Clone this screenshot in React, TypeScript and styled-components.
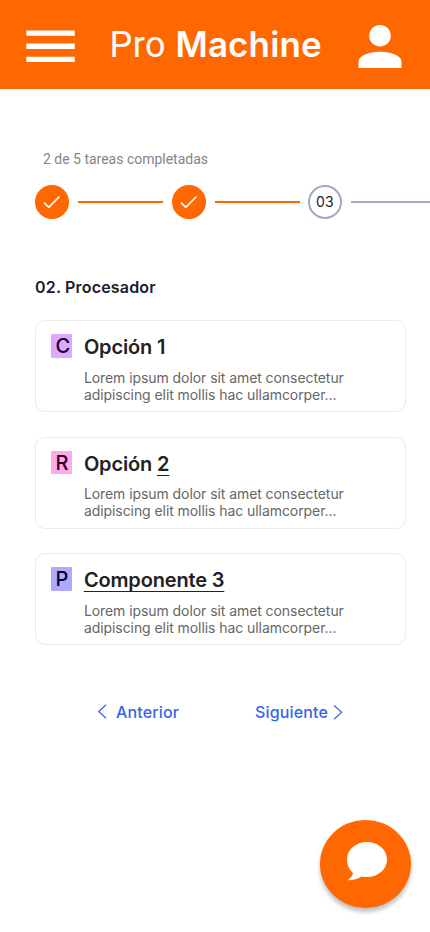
import React from "react";
import styled, { createGlobalStyle } from "styled-components";

const GlobalStyle = createGlobalStyle`
  *, *::before, *::after { box-sizing: border-box; }
  body { margin: 0; background: #fff; overflow: hidden; font-family: Inter, "Liberation Sans", sans-serif; }
  svg { display: block; flex: none; }
  button { font: inherit; border: 0; padding: 0; background: none; cursor: pointer; }
`;

const Screen = styled.div`
  width: 430px;
  height: 932px;
  overflow: hidden;
  background: #fff;
`;

const Header = styled.header`
  display: flex;
  align-items: center;
  height: 89px;
  padding: 0 28px 0 26px;
  background: #ff6700;
`;

const IconButton = styled.button`
  color: #fff;
`;

const Brand = styled.h1`
  flex: 1;
  margin: 0 0 0 34.5px;
  font: 400 36px/44px Roboto, sans-serif;
  letter-spacing: 0.5px;
  white-space: nowrap;
  color: #fff;

  strong {
    font-family: Inter, sans-serif;
    font-size: 35px;
    font-weight: 600;
    letter-spacing: 0.1px;
  }
`;

const Main = styled.main`
  padding: 60px 24px 0 35px;
`;

const Progress = styled.p`
  margin: 0 0 15px 8px;
  font: 400 14px/21px Roboto, sans-serif;
  letter-spacing: -0.01px;
  color: #858585;
`;

const Stepper = styled.div`
  display: flex;
  align-items: center;
  gap: 8.5px;
  width: 520px;
  height: 34px;
`;

const Step = styled.div<{ $done?: boolean }>`
  display: grid;
  place-items: center;
  flex: none;
  width: 34px;
  height: 34px;
  margin-right: 0.5px;
  border-radius: 50%;
  border: 2px solid ${({ $done }) => ($done ? "#ff6700" : "#a0abc0")};
  background: ${({ $done }) => ($done ? "#ff6700" : "#fff")};
  color: #1a202c;
  font: 400 14px/20px Inter, sans-serif;
  letter-spacing: 0.3px;
`;

const Connector = styled.div<{ $done?: boolean }>`
  flex: none;
  width: 85px;
  height: 2px;
  background: ${({ $done }) => ($done ? "#ff6700" : "#a0abc0")};
`;

const SectionTitle = styled.h2`
  margin: 56px 0 21px;
  font: 600 16px/24px Inter, sans-serif;
  letter-spacing: 0.18px;
  color: #1a202c;
`;

const Options = styled.div`
  display: flex;
  flex-direction: column;
  gap: 24.5px;
`;

const Card = styled.article`
  display: flex;
  gap: 12px;
  height: 92px;
  padding: 13px 16px 0 15.4px;
  border: 1px solid #ebebeb;
  border-radius: 10px;
`;

const Letter = styled.div<{ $bg: string; $ink: string }>`
  flex: none;
  width: 20.5px;
  height: 23.5px;
  padding-left: 4px;
  border-radius: 1px;
  background: ${({ $bg }) => $bg};
  color: ${({ $ink }) => $ink};
  font: 550 20px/25px Inter, sans-serif;
`;

const CardTitle = styled.h3`
  margin: 0;
  font: 600 20px/26px Inter, sans-serif;
  letter-spacing: -0.16px;
  color: #222;
`;

const Underlined = styled.span`
  text-decoration: underline;
  text-decoration-thickness: 1px;
  text-underline-offset: 4px;
  text-decoration-skip-ink: none;
`;

const Description = styled.p`
  width: 280px;
  margin: 8.7px 0 0;
  font: 400 14px/17px Inter, sans-serif;
  letter-spacing: -0.07px;
  color: #666;
`;

const Pager = styled.nav`
  display: flex;
  justify-content: space-between;
  height: 24px;
  margin: 55px 63px 0 62px;
`;

const PagerButton = styled.button<{ $gap: number }>`
  display: flex;
  align-items: center;
  gap: ${({ $gap }) => $gap}px;
  color: #3764eb;
  font: 500 16px/24px Inter, sans-serif;
  letter-spacing: 0.15px;
`;

const ChatButton = styled.button`
  position: absolute;
  left: 320px;
  top: 820px;
  display: grid;
  place-items: center;
  width: 91px;
  height: 88px;
  padding-bottom: 6px;
  border-radius: 50%;
  background: #ff6700;
  box-shadow: 0 4px 4px rgba(0, 0, 0, 0.25);
`;

const Check = () => (
  <svg width="18" height="14" viewBox="0 0 18 14" fill="none" stroke="#fff" strokeWidth="1.7">
    <path d="M1 7.7 5.8 12.3 16.5 1.5" />
  </svg>
);

const Chevron = ({ right = false }: { right?: boolean }) => (
  <svg width="10" height="16" viewBox="0 0 10 16" fill="none" stroke="currentColor" strokeWidth="1.2">
    <path d={right ? "M1 1.5 8.7 8.3 1 15.3" : "M9 .7 1.8 7.5 9 14.3"} />
  </svg>
);

const options = [
  { letter: "C", bg: "#dfa8ff", ink: "#16002b", title: <>Opción 1</> },
  { letter: "R", bg: "#ffa8ea", ink: "#2b001f", title: <>Opción <Underlined>2</Underlined></> },
  { letter: "P", bg: "#afa8ff", ink: "#10002b", title: <Underlined>Componente 3</Underlined> },
];

export default function App() {
  return (
    <Screen>
      <GlobalStyle />
      <Header>
        <IconButton aria-label="Menú">
          <svg width="49" height="34" viewBox="0 0 49 34" fill="currentColor">
            <path d="M.3 2.5h48.5v5.3H.3zM.3 15.6h48.5v5.5H.3zM.3 28.7h48.5V34H.3z" />
          </svg>
        </IconButton>
        <Brand>Pro <strong>Machine</strong></Brand>
        <IconButton aria-label="Perfil">
          <svg width="44" height="46" viewBox="0 0 44 46" fill="currentColor">
            <circle cx="22" cy="13.7" r="10.8" />
            <path d="M.5 46V40C.5 33 12 29.700 22 29.700S43.500 33 43.500 40v6z" />
          </svg>
        </IconButton>
      </Header>
      <Main>
        <Progress>2 de 5 tareas completadas</Progress>
        <Stepper>
          <Step $done><Check /></Step>
          <Connector $done />
          <Step $done><Check /></Step>
          <Connector $done />
          <Step>03</Step>
          <Connector />
        </Stepper>
        <SectionTitle>02. Procesador</SectionTitle>
        <Options>
          {options.map(({ letter, bg, ink, title }) => (
            <Card key={letter}>
              <Letter $bg={bg} $ink={ink}>{letter}</Letter>
              <div>
                <CardTitle>{title}</CardTitle>
                <Description>
                  Lorem ipsum dolor sit amet consectetur adipiscing elit mollis hac ullamcorper...
                </Description>
              </div>
            </Card>
          ))}
        </Options>
        <Pager>
          <PagerButton $gap={9}><Chevron /><span>Anterior</span></PagerButton>
          <PagerButton $gap={5}><span>Siguiente</span><Chevron right /></PagerButton>
        </Pager>
      </Main>
      <ChatButton aria-label="Chat">
        <svg width="42" height="42" viewBox="0 0 42 42" fill="#fff">
          <path d="M22 2C33 2 42 9.500 42 19.500S33 37 22 37Q19 37 16.500 36.500C12 39.500 7 40.500 2.500 40.200Q7.500 37 8 33C4 29.500 2 25 2 19.500 2 9.500 11 2 22 2Z" />
        </svg>
      </ChatButton>
    </Screen>
  );
}
